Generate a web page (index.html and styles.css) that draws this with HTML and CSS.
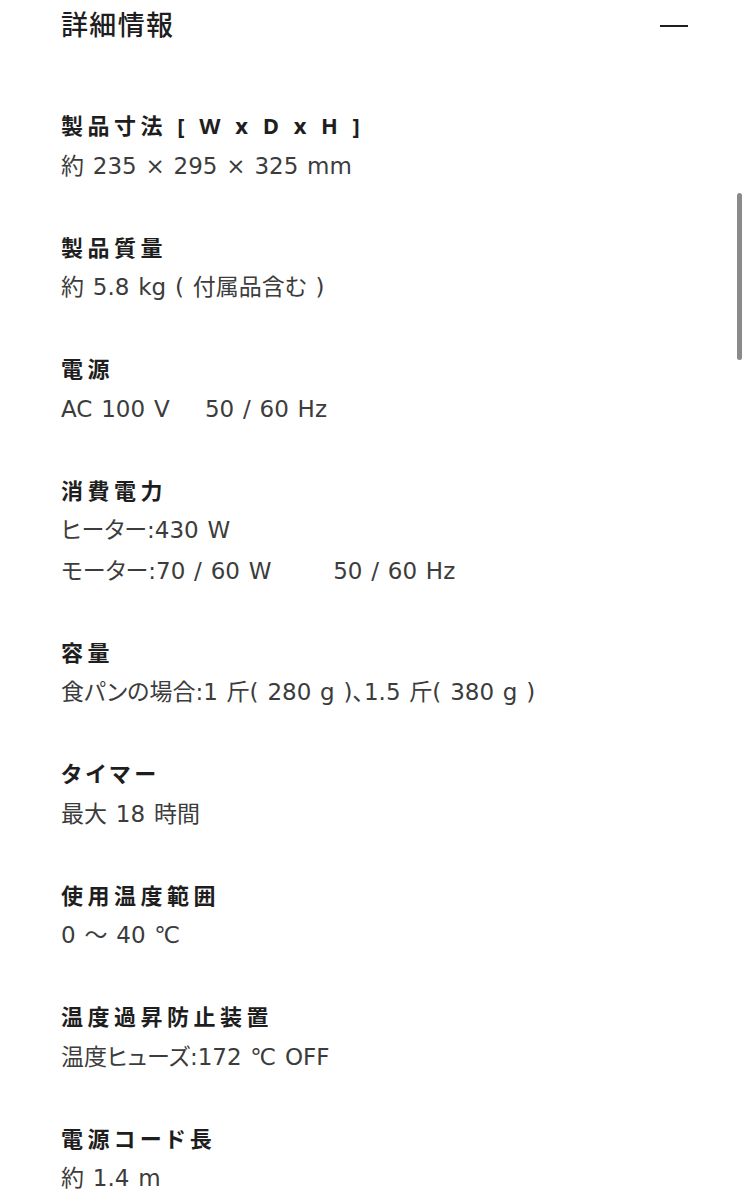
FILE: index.html
```html
<!DOCTYPE html>
<html lang="ja">
<head>
<meta charset="utf-8">
<title>詳細情報</title>
<link rel="stylesheet" href="styles.css">
</head>
<body>
<div class="page">
  <div class="title-row">
    <h1 class="title">詳細情報</h1>
    <span class="minus" aria-hidden="true"></span>
  </div>
  <dl class="specs">
    <div class="spec">
      <dt>製品寸法 [ W x D x H ]</dt>
      <dd>約 235 × 295 × 325 mm</dd>
    </div>
    <div class="spec">
      <dt>製品質量</dt>
      <dd>約 5.8 kg ( 付属品含む )</dd>
    </div>
    <div class="spec">
      <dt>電源</dt>
      <dd>AC 100 V&nbsp;&nbsp;&nbsp;&nbsp;50 / 60 Hz</dd>
    </div>
    <div class="spec">
      <dt>消費電力</dt>
      <dd>ヒーター:430 W</dd>
      <dd>モーター:70 / 60 W&nbsp;&nbsp;&nbsp;&nbsp;&nbsp;&nbsp;&nbsp;50 / 60 Hz</dd>
    </div>
    <div class="spec">
      <dt>容量</dt>
      <dd>食パンの場合:1 斤( 280 g )、1.5 斤( 380 g )</dd>
    </div>
    <div class="spec">
      <dt>タイマー</dt>
      <dd>最大 18 時間</dd>
    </div>
    <div class="spec">
      <dt>使用温度範囲</dt>
      <dd>0 ～ 40 ℃</dd>
    </div>
    <div class="spec">
      <dt>温度過昇防止装置</dt>
      <dd>温度ヒューズ:172 ℃ OFF</dd>
    </div>
    <div class="spec">
      <dt>電源コード長</dt>
      <dd>約 1.4 m</dd>
    </div>
  </dl>
</div>
<div class="scrollbar" aria-hidden="true"></div>
</body>
</html>
```

FILE: styles.css
```css
html, body {
  margin: 0;
  padding: 0;
  background: #ffffff;
}

body {
  font-family: "DejaVu Sans", "Noto Sans CJK JP", sans-serif;
  font-feature-settings: "palt";
  color: #3c3c3c;
  overflow: hidden;
}

.page {
  padding: 0 61px 0 61px;
}

.title-row {
  display: flex;
  align-items: center;
  justify-content: space-between;
  height: 52px;
}

.title {
  margin: 0;
  font-size: 27px;
  font-weight: 500;
  color: #1e1e1e;
  letter-spacing: 0.05em;
  line-height: 52px;
}

.minus {
  display: block;
  width: 28px;
  height: 2px;
  background: #1e1e1e;
}

.specs {
  margin: 53px 0 0 0;
  padding: 0;
}

.spec {
  margin-bottom: 40.5px;
}

.spec dt {
  font-family: "Open Sans", "Noto Sans CJK JP", sans-serif;
  font-size: 22px;
  font-weight: 700;
  color: #1e1e1e;
  letter-spacing: 4.5px;
  line-height: 40.5px;
}

.spec dd {
  margin: 0;
  font-size: 23px;
  line-height: 40.5px;
  word-spacing: 1.5px;
  color: #3c3c3c;
}

.scrollbar {
  position: fixed;
  top: 193px;
  right: 7px;
  width: 5px;
  height: 167px;
  border-radius: 3px;
  background: #8a8a8a;
}
```
